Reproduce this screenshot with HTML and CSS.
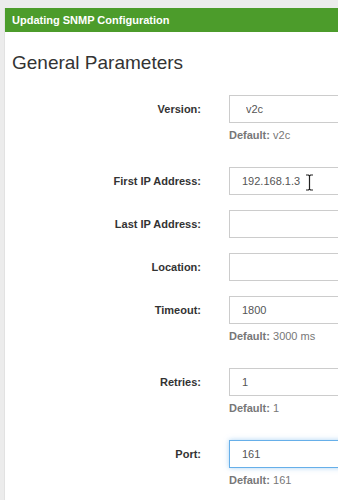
FILE: index.html
```
<!DOCTYPE html>
<html lang="en">
<head>
    <link rel="stylesheet" href="styles.css">
</head>
<body>
    <div class="panel">
        <div class="panel-heading">Updating SNMP Configuration</div>
        <div class="panel-body">
            <h2 class="section-title">General Parameters</h2>
            <form class="form-horizontal">
                <div class="form-group">
                    <label>Version:</label>
                    <div class="field">
                        <select class="form-control select"><option>v2c</option></select>
                        <span class="help-block"><b>Default:</b> v2c</span>
                    </div>
                </div>
                <div class="form-group">
                    <label>First IP Address:</label>
                    <div class="field">
                        <input class="form-control" type="text" value="192.168.1.3">
                        <svg class="ibeam" width="9" height="17" viewBox="0 0 9 17">
                            <path d="M1 1h2.5l1 1 1-1H8M4.5 2v13M1 16h2.5l1-1 1 1H8" fill="none" stroke="#222" stroke-width="1.2"/>
                        </svg>
                    </div>
                </div>
                <div class="form-group">
                    <label>Last IP Address:</label>
                    <div class="field"><input class="form-control" type="text" value=""></div>
                </div>
                <div class="form-group">
                    <label>Location:</label>
                    <div class="field"><input class="form-control" type="text" value=""></div>
                </div>
                <div class="form-group">
                    <label>Timeout:</label>
                    <div class="field">
                        <input class="form-control" type="text" value="1800">
                        <span class="help-block"><b>Default:</b> 3000 ms</span>
                    </div>
                </div>
                <div class="form-group">
                    <label>Retries:</label>
                    <div class="field">
                        <input class="form-control" type="text" value="1">
                        <span class="help-block"><b>Default:</b> 1</span>
                    </div>
                </div>
                <div class="form-group">
                    <label>Port:</label>
                    <div class="field">
                        <input class="form-control focused" type="text" value="161">
                        <span class="help-block"><b>Default:</b> 161</span>
                    </div>
                </div>
            </form>
        </div>
    </div>
</body>
</html>
```

FILE: styles.css
```
body {
    margin: 0;
    background: #ececec;
    font-family: "Liberation Sans", Arial, sans-serif;
    overflow: hidden;
}

.panel {
    margin: 8px 0 0 4px;
    background: #fff;
    border-left: 1px solid #e2e2e2;
    min-height: 500px;
}

.panel-heading {
    height: 24px;
    line-height: 24px;
    padding-left: 7px;
    background: #4c9c2b;
    color: #fff;
    font-size: 11px;
    font-weight: bold;
}

.panel-body {
    padding: 0 7px;
}

.section-title {
    margin: 20px 0 21px;
    font-size: 19px;
    line-height: 22px;
    font-weight: normal;
    color: #333;
}

.form-group {
    display: grid;
    grid-template-columns: 189px 1fr;
    column-gap: 28px;
    margin-bottom: 15px;
}

.form-group label {
    height: 28px;
    line-height: 28px;
    text-align: right;
    font-size: 11px;
    font-weight: bold;
    color: #333;
}

.field {
    position: relative;
}

.form-control {
    box-sizing: border-box;
    display: block;
    width: 200px;
    height: 28px;
    margin: 0;
    padding: 0 12px;
    border: 1px solid #ccc;
    border-radius: 0;
    background: #fff;
    font-family: "Liberation Sans", Arial, sans-serif;
    font-size: 11px;
    color: #555;
    outline: none;
}

.select {
    appearance: none;
    -webkit-appearance: none;
    padding-left: 16px;
}

.focused {
    border-color: #66afe9;
    box-shadow: 0 0 5px rgba(102, 175, 233, 0.55);
}

.help-block {
    display: block;
    margin: 4px 0 9px;
    line-height: 16px;
    font-size: 11px;
    color: #777;
}

.ibeam {
    position: absolute;
    left: 76px;
    top: 7px;
}
```
